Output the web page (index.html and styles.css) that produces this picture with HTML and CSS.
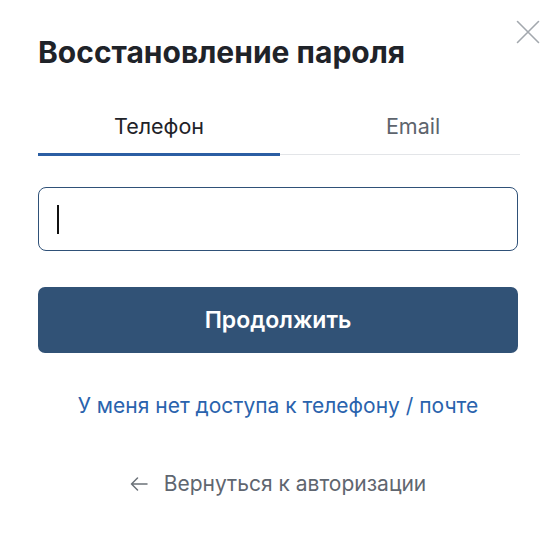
FILE: index.html
```html
<!DOCTYPE html>
<html lang="ru">
<head>
<meta charset="utf-8">
<link rel="stylesheet" href="styles.css">
</head>
<body>
<div class="modal">
  <button class="close" aria-label="Закрыть">
    <svg width="26" height="26" viewBox="0 0 26 26"><path d="M2.5 2.5 L23.5 23.5 M23.5 2.5 L2.5 23.5" stroke="#a3a8ae" stroke-width="1.6" fill="none" stroke-linecap="round"/></svg>
  </button>
  <h1 class="title">Восстановление пароля</h1>
  <div class="tabs">
    <div class="tab active">Телефон</div>
    <div class="tab second">Email</div>
  </div>
  <div class="field"><span class="caret"></span></div>
  <button class="primary">Продолжить</button>
  <a class="link" href="#">У меня нет доступа к телефону / почте</a>
  <a class="back" href="#"><span class="arrow">
    <svg width="18" height="14" viewBox="0 0 18 14"><path d="M17 7 H1.5 M7.5 1 L1.5 7 L7.5 13" stroke="#6b7178" stroke-width="1.5" fill="none" stroke-linecap="round" stroke-linejoin="round"/></svg>
  </span>Вернуться к авторизации</a>
</div>
</body>
</html>
```
FILE: styles.css
```css
html, body {
  margin: 0;
  padding: 0;
  background: #ffffff;
}
body {
  font-family: Inter, "Noto Sans", sans-serif;
  color: #1f2329;
}
.modal {
  position: relative;
  width: 558px;
  height: 537px;
  box-sizing: border-box;
  padding: 34px 40px 0 38px;
  display: flex;
  flex-direction: column;
}
.close {
  position: absolute;
  top: 18px;
  right: 16px;
  width: 28px;
  height: 28px;
  padding: 0;
  border: 0;
  background: none;
  display: flex;
  align-items: center;
  justify-content: center;
}
.title {
  margin: 0;
  font-size: 30px;
  line-height: 36px;
  font-weight: 700;
  color: #1f2329;
}
.tabs {
  margin-top: 43px;
  display: flex;
  border-bottom: 1px solid #e3e5e8;
  width: 482px;
}
.tab {
  box-sizing: border-box;
  text-align: center;
  font-size: 21.5px;
  line-height: 26px;
  padding-bottom: 14px;
  color: #5d646d;
  border-bottom: 3px solid transparent;
  margin-bottom: -2px;
}
.tab.active {
  flex: 0 0 242px;
  color: #1f2329;
  border-bottom-color: #2b5ea3;
  border-radius: 0 2px 0 0;
}
.tab.second {
  flex: 1 1 0;
  padding-left: 26px;
}
.field {
  margin-top: 32px;
  width: 480px;
  height: 64px;
  box-sizing: border-box;
  border: 1px solid #2f5178;
  border-radius: 8px;
  display: flex;
  align-items: center;
  padding-left: 18px;
}
.caret {
  width: 2px;
  height: 29px;
  background: #111;
}
.primary {
  margin-top: 36px;
  width: 480px;
  height: 66px;
  border: 0;
  border-radius: 7px;
  background: #315276;
  color: #ffffff;
  font-family: Inter, "Noto Sans", sans-serif;
  font-size: 23px;
  font-weight: 600;
  padding: 0;
}
.link {
  margin-top: 40px;
  width: 480px;
  text-align: center;
  font-size: 21px;
  line-height: 26px;
  color: #2a63ad;
  text-decoration: none;
}
.back {
  margin-top: 52px;
  width: 480px;
  display: flex;
  justify-content: center;
  align-items: center;
  font-size: 21px;
  line-height: 26px;
  color: #5f6670;
  text-decoration: none;
}
.arrow {
  display: flex;
  margin-right: 16px;
}
```
